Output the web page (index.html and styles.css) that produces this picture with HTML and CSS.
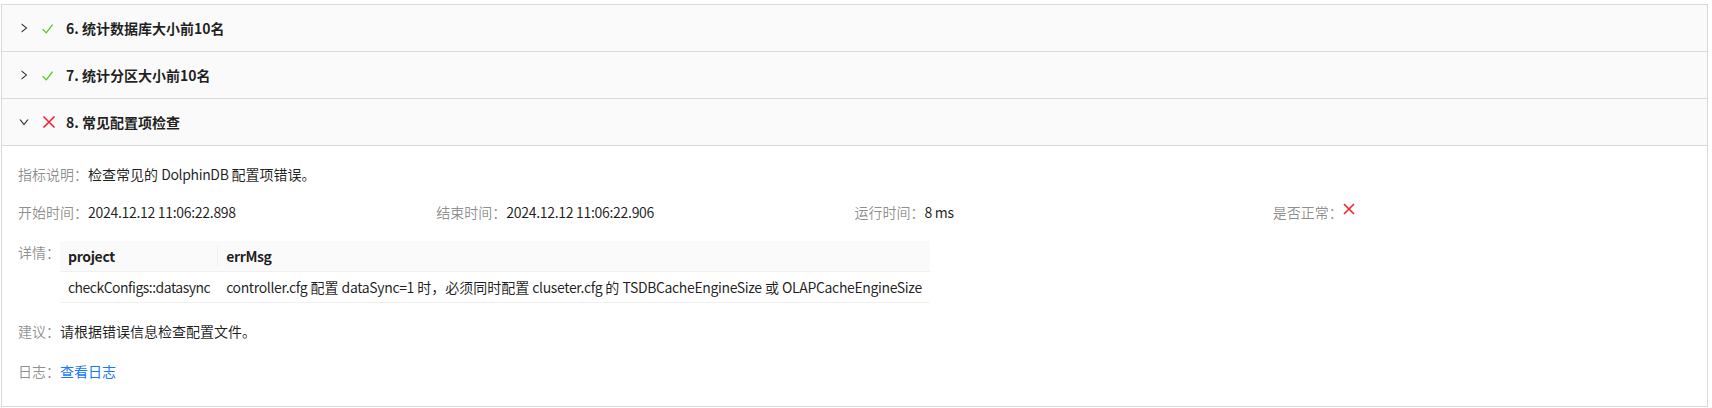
FILE: index.html
```html
<!DOCTYPE html>
<html lang="zh-CN">
<head>
<meta charset="utf-8">
<title>巡检结果</title>
<link rel="stylesheet" href="styles.css">
</head>
<body>
<div class="collapse">
  <div class="item">
    <div class="header">
      <svg class="arrow" viewBox="0 0 1024 1024" width="12" height="12"><path d="M765.7 486.8L314.9 134.7A7.97 7.97 0 00302 141v77.3c0 4.9 2.3 9.6 6.1 12.6l360 281.1-360 281.1c-3.9 3-6.1 7.7-6.1 12.6V883c0 6.7 7.7 10.4 12.9 6.3l450.8-352.1a31.960 31.960 0 000-50.4z"/></svg>
      <svg class="status ok" viewBox="0 0 14 14" width="14" height="14"><polyline points="0.6,8.2 4.2,11.8 10.6,3.6"/></svg>
      <span class="title">6. 统计数据库大小前10名</span>
    </div>
  </div>
  <div class="item">
    <div class="header">
      <svg class="arrow" viewBox="0 0 1024 1024" width="12" height="12"><path d="M765.7 486.8L314.9 134.7A7.97 7.97 0 00302 141v77.3c0 4.9 2.3 9.6 6.1 12.6l360 281.1-360 281.1c-3.9 3-6.1 7.7-6.1 12.6V883c0 6.7 7.7 10.4 12.9 6.3l450.8-352.1a31.960 31.960 0 000-50.4z"/></svg>
      <svg class="status ok" viewBox="0 0 14 14" width="14" height="14"><polyline points="0.6,8.2 4.2,11.8 10.6,3.6"/></svg>
      <span class="title">7. 统计分区大小前10名</span>
    </div>
  </div>
  <div class="item open">
    <div class="header">
      <svg class="arrow down" viewBox="0 0 1024 1024" width="12" height="12"><path d="M765.7 486.8L314.9 134.7A7.97 7.97 0 00302 141v77.3c0 4.9 2.3 9.6 6.1 12.6l360 281.1-360 281.1c-3.9 3-6.1 7.7-6.1 12.6V883c0 6.7 7.7 10.4 12.9 6.3l450.8-352.1a31.960 31.960 0 000-50.4z"/></svg>
      <svg class="status bad" viewBox="0 0 14 14" width="14" height="14"><path d="M1.5 1.5L12.5 12.5M12.5 1.5L1.5 12.5"/></svg>
      <span class="title">8. 常见配置项检查</span>
    </div>
    <div class="content">
      <div class="line r1"><span class="label">指标说明：</span><span class="value">检查常见的 <span class="en">DolphinDB</span> 配置项错误。</span></div>
      <div class="grid r2">
        <div><span class="label">开始时间：</span><span class="value num">2024.12.12 11:06:22.898</span></div>
        <div><span class="label">结束时间：</span><span class="value num">2024.12.12 11:06:22.906</span></div>
        <div><span class="label">运行时间：</span><span class="value num">8 ms</span></div>
        <div><span class="label">是否正常：</span><svg class="xmark" viewBox="0 0 12 12" width="12" height="12"><path d="M1 1L11 11M11 1L1 11"/></svg></div>
      </div>
      <div class="line detail r3">
        <span class="label">详情：</span>
        <table class="tbl">
          <thead><tr><th class="sep"><span class="en">project</span></th><th><span class="en">errMsg</span></th></tr></thead>
          <tbody><tr><td class="c1"><span class="en">checkConfigs::datasync</span></td><td class="c2"><span class="en">controller.cfg</span> 配置 <span class="en">dataSync=1</span> 时，必须同时配置 <span class="en">cluseter.cfg</span> 的 <span class="en">TSDBCacheEngineSize</span> 或 <span class="en">OLAPCacheEngineSize</span></td></tr></tbody>
        </table>
      </div>
      <div class="line r4"><span class="label">建议：</span><span class="value">请根据错误信息检查配置文件。</span></div>
      <div class="line r5"><span class="label">日志：</span><a class="link" href="#">查看日志</a></div>
    </div>
  </div>
</div>
</body>
</html>
```
FILE: styles.css
```css
* { box-sizing: border-box; }
html, body { background: #ffffff; }
body {
  margin: 0;
  font-family: "Noto Sans CJK SC", "Noto Sans", sans-serif;
  font-size: 14px;
  line-height: 22px;
  color: rgba(0, 0, 0, 0.88);
}
.collapse {
  margin: 4px 4px 0 1px;
  border: 1px solid #d9d9d9;
  background: #fafafa;
}
.item { border-bottom: 1px solid #d9d9d9; }
.item.open { border-bottom: none; }
.header {
  display: flex;
  align-items: center;
  height: 46px;
  padding: 0 16px;
}
.arrow {
  fill: rgba(0, 0, 0, 0.88);
  margin-right: 12px;
  flex: none;
}
.arrow.down { transform: rotate(90deg); }
.status {
  flex: none;
  margin-right: 10px;
  fill: none;
}
.status.ok polyline { stroke: #52c41a; stroke-width: 1.2; }
.status.bad path { stroke: #f5222d; stroke-width: 1.6; }
.title { font-weight: 700; }
.content {
  background: #ffffff;
  border-top: 1px solid #d9d9d9;
  padding: 17px 16px 24px;
}
.label { color: rgba(0, 0, 0, 0.45); }
.value { color: rgba(0, 0, 0, 0.88); }
.num { letter-spacing: -0.3px; }
.en { letter-spacing: -0.35px; }
.line { display: flex; align-items: flex-start; }
.r2 { margin-top: 16px; }
.r3 { margin-top: 18px; }
.r4 { margin-top: 17px; }
.r5 { margin-top: 18px; }
.grid {
  display: grid;
  grid-template-columns: repeat(4, 1fr);
}
.xmark {
  display: inline-block;
  vertical-align: top;
  margin-top: 2px;
  fill: none;
}
.xmark path { stroke: #f5222d; stroke-width: 1.6; }
.tbl {
  border-collapse: collapse;
  font-size: 14px;
}
.tbl th, .tbl td {
  padding: 4px 8px;
  line-height: 22px;
  text-align: left;
  border-bottom: 1px solid #f0f0f0;
  white-space: nowrap;
}
.tbl td.c1 .en { letter-spacing: -0.52px; }
.tbl td.c2 .en { letter-spacing: -0.36px; }
.tbl th {
  background: #fafafa;
  font-weight: 700;
  position: relative;
}
.tbl th.sep::after {
  content: "";
  position: absolute;
  right: 0;
  top: 50%;
  width: 1px;
  height: 20px;
  margin-top: -10px;
  background: #f0f0f0;
}
.link { color: #1677ff; text-decoration: none; }
```
